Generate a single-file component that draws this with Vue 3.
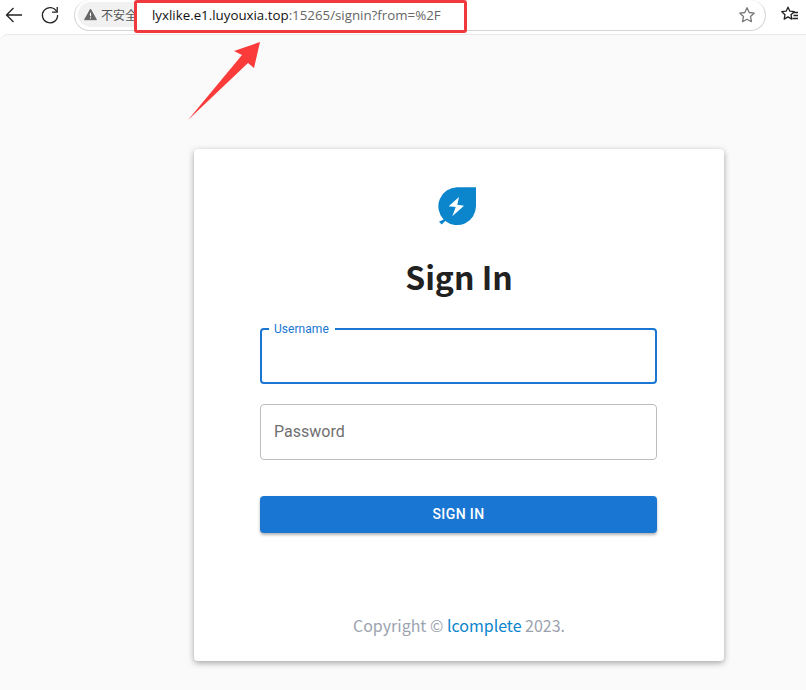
<script setup>
import { ref } from 'vue'

const username = ref('')
const password = ref('')
</script>

<template>
  <div class="page">
    <header class="toolbar">
      <svg class="nav-icon back" viewBox="0 0 20 20" width="20" height="20">
        <path d="M18 10H2.500M9.500 3l-7 7 7 7" fill="none" stroke="#222" stroke-width="1.3" />
      </svg>
      <svg class="nav-icon reload" viewBox="0 0 20 20" width="20" height="20">
        <path d="M16.600 6.500A7.600 7.600 0 1 0 17.600 10" fill="none" stroke="#222" stroke-width="1.3" />
        <path d="M17.200 2v5.200H12" fill="none" stroke="#222" stroke-width="1.3" />
      </svg>
      <div class="omnibox">
        <div class="secure">
          <svg viewBox="0 0 14 14" width="13" height="13">
            <path d="M7 1.200 13.400 12.600H.6Z" fill="#666" stroke="#666" stroke-linejoin="round" />
            <path d="M7 5v4M7 10v1.200" stroke="#fff" stroke-width="1.2" />
          </svg>
          <span>不安全</span>
        </div>
        <div class="url"><b>lyxlike.e1.luyouxia.top</b>:15265/signin?from=%2F</div>
        <svg class="star" viewBox="0 0 18 18" width="18" height="18">
          <path d="M9 1.800l2.200 4.700 5.100.6-3.800 3.500 1 5.100L9 13.200l-4.500 2.500 1-5.100L1.700 7.100l5.100-.6Z" fill="none" stroke="#777" stroke-width="1.3" stroke-linejoin="round" />
        </svg>
      </div>
      <svg class="favs" viewBox="0 0 20 20" width="20" height="20">
        <path d="M8 2.200l1.900 4 4.300.5-3.200 3 .8 4.400L8 11.900l-3.800 2.200.8-4.400-3.200-3 4.300-.5Z" fill="none" stroke="#222" stroke-width="1.3" stroke-linejoin="round" />
        <path d="M13 7.500h5M13.500 10.500h4.500M12.500 13.500h5.500" stroke="#222" stroke-width="1.3" />
      </svg>
    </header>

    <main class="content">
      <section class="card">
        <svg class="logo" viewBox="0 0 40 40" width="40" height="40">
          <path d="M39 1.300H20A19 19 0 0 0 6.600 33.400L2 35.700 4.700 38.500 8.200 35A19 19 0 0 0 39 20Z" fill="#0b85cc" />
          <path d="M22 11 11.700 20.300 18.700 21 15.300 30.300 27 19.700 20.300 18.700Z" fill="#fff" />
        </svg>
        <h1 class="title">Sign In</h1>

        <form class="form" @submit.prevent>
          <div class="field focused">
            <label>Username</label>
            <input v-model="username" type="text" />
          </div>
          <div class="field">
            <input v-model="password" type="password" placeholder="Password" />
          </div>
          <button class="submit" type="submit">SIGN IN</button>
        </form>

        <p class="copyright">Copyright © <a href="#">lcomplete</a> 2023.</p>
      </section>
    </main>

    <!-- красная разметка поверх скриншота -->
    <div class="mark-box"></div>
    <svg class="mark-arrow" viewBox="0 0 90 90" width="90" height="90">
      <path d="M0 79 54 14 46 10 72 1 66 27 60 22Z" fill="#fb3a3a" />
    </svg>
  </div>
</template>

<style scoped>
.page {
  position: relative;
  width: 806px;
  height: 690px;
  overflow: hidden;
  background: #fff;
  font-family: Roboto, "Liberation Sans", sans-serif;
}

.toolbar {
  display: flex;
  align-items: center;
  height: 34px;
  box-sizing: border-box;
  padding: 0 6px 4px 4px;
}

.nav-icon {
  flex: none;
}

.reload {
  margin-left: 16px;
}

.omnibox {
  display: flex;
  flex: 1;
  align-items: center;
  height: 31px;
  box-sizing: border-box;
  margin: 0 14px 0 14px;
  padding: 0 9px 0 3px;
  border: 1px solid #d6d6d6;
  border-top: 0;
  border-radius: 16px;
}

.secure {
  display: flex;
  align-items: center;
  gap: 4px;
  height: 25px;
  padding: 0 8px 0 6px;
  border-radius: 13px;
  background: #f1f1f1;
  color: #555;
  font: 12px "Noto Sans CJK SC", sans-serif;
}

.url {
  position: relative;
  z-index: 2;
  flex: 1;
  margin-left: 7px;
  color: #666;
  font: 13.3px "Open Sans", "Liberation Sans", sans-serif;
  white-space: nowrap;
}

.url b {
  color: #111;
  font-weight: 400;
}

.star,
.favs {
  flex: none;
}

.content {
  height: 656px;
  box-sizing: border-box;
  padding: 114px 0 0 194px;
  border-top: 1px solid #e8e8e8;
  border-radius: 8px 0 0 0;
  background: #fafafa;
}

.card {
  display: flex;
  flex-direction: column;
  align-items: center;
  width: 530px;
  height: 512px;
  box-sizing: border-box;
  padding-top: 37px;
  border-radius: 4px;
  background: #fff;
  box-shadow: 0 2px 6px rgba(0, 0, 0, 0.35);
}

.logo {
  flex: none;
  margin-right: 4px;
}

.title {
  margin: 27px 0 0;
  color: #212121;
  font: 700 32px/46px "Noto Sans CJK SC", sans-serif;
}

.form {
  display: flex;
  flex-direction: column;
  width: 397px;
  margin: 29px 1px 0 0;
}

.field {
  position: relative;
  height: 56px;
  margin-bottom: 20px;
}

.field input {
  width: 100%;
  height: 100%;
  box-sizing: border-box;
  padding: 0 13px 2px;
  border: 1px solid #bdbdbd;
  border-radius: 4px;
  outline: 0;
  background: #fff;
  color: #212121;
  font: 16px Roboto, sans-serif;
}

.field input::placeholder {
  color: #6f6f6f;
  opacity: 1;
}

.focused input {
  border: 2px solid #1976d2;
}

.focused label {
  position: absolute;
  top: -6px;
  left: 9px;
  padding: 0 6px 0 5px;
  background: #fff;
  color: #1976d2;
  font: 12px/14px Roboto, sans-serif;
  letter-spacing: 0.05px;
}

.submit {
  height: 37px;
  margin-top: 16px;
  padding: 0 0 2px;
  border: 0;
  border-radius: 4px;
  background: #1976d2;
  box-shadow: 0 2px 3px rgba(0, 0, 0, 0.3);
  color: #fff;
  font: 500 14px Roboto, sans-serif;
  letter-spacing: 0.4px;
}

.copyright {
  margin: 80px 0 0;
  color: #9ca3af;
  font: 16px/24px "Noto Sans CJK SC", sans-serif;
}

.copyright a {
  color: #0b85cc;
  text-decoration: none;
}

.mark-box {
  position: absolute;
  z-index: 1;
  top: 0;
  left: 134px;
  width: 333px;
  height: 33px;
  box-sizing: border-box;
  border: 3px solid #f0393f;
  border-radius: 3px;
  background: #fff;
}

.mark-arrow {
  position: absolute;
  top: 41px;
  left: 188px;
}
</style>
